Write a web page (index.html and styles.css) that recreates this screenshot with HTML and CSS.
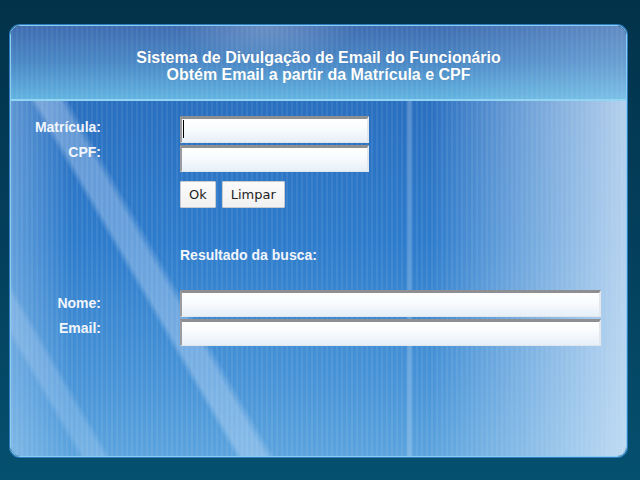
FILE: index.html
```html
<!DOCTYPE html>
<html lang="pt-BR">
<head>
<meta charset="utf-8">
<title>Sistema de Divulgação de Email do Funcionário</title>
<link rel="stylesheet" href="styles.css">
</head>
<body>
<div class="panel">
  <div class="header">
    <div class="title">Sistema de Divulgação de Email do Funcionário</div>
    <div class="title">Obtém Email a partir da Matrícula e CPF</div>
  </div>
  <div class="content">
    <div class="group group-search">
      <div class="labels">
        <label class="lbl" for="mat">Matrícula:</label>
        <label class="lbl" for="cpf">CPF:</label>
      </div>
      <div class="fields">
        <span class="field-wrap"><input class="txt txt-short" id="mat" type="text"><span class="caret"></span></span>
        <input class="txt txt-short" id="cpf" type="text">
        <div class="buttons">
          <button class="btn" type="button">Ok</button>
          <button class="btn" type="button">Limpar</button>
        </div>
      </div>
    </div>
    <div class="result-title">Resultado da busca:</div>
    <div class="group group-result">
      <div class="labels">
        <label class="lbl" for="nome">Nome:</label>
        <label class="lbl" for="email">Email:</label>
      </div>
      <div class="fields">
        <input class="txt txt-long" id="nome" type="text">
        <input class="txt txt-long" id="email" type="text">
      </div>
    </div>
  </div>
</div>
</body>
</html>
```

FILE: styles.css
```css
html, body {
  margin: 0;
  padding: 0;
}
body {
  width: 640px;
  height: 480px;
  overflow: hidden;
  background: linear-gradient(to bottom, #02324a 0%, #033f5c 50%, #05506f 100%);
  font-family: "Liberation Sans", Arial, sans-serif;
}
.panel {
  margin: 25px 0 0 10px;
  width: 615px;
  height: 430px;
  border: 1px solid #8fcdf0;
  border-radius: 10px;
  overflow: hidden;
  display: flex;
  flex-direction: column;
  box-shadow: 0 0 0 1px #2b7cc0;
}
.header {
  height: 75px;
  box-sizing: border-box;
  padding-top: 23px;
  border-bottom: 2px solid #93d4f2;
  text-align: center;
  color: #ffffff;
  background:
    radial-gradient(ellipse 90px 40px at 255px 0px, rgba(255,255,255,0.22), rgba(255,255,255,0) 100%),
    linear-gradient(to right, rgba(255,255,255,0) 0%, rgba(255,255,255,0) 70%, rgba(200,230,250,0.25) 100%),
    repeating-linear-gradient(to right, rgba(255,255,255,0.05) 0 2px, rgba(255,255,255,0) 2px 5px),
    linear-gradient(to bottom, #3f6db1 0%, #4a88c6 50%, #62b3e0 100%);
}
.title {
  font-size: 16px;
  font-weight: bold;
  line-height: 17px;
  text-shadow: 0 0 1px rgba(0,0,0,0.15);
}
.content {
  flex: 1;
  color: #f2f6fb;
  background:
    linear-gradient(to right, rgba(255,255,255,0) 0px, rgba(255,255,255,0) 396px, rgba(255,255,255,0.22) 397px, rgba(255,255,255,0.22) 400px, rgba(255,255,255,0) 401px),
    linear-gradient(60deg, rgba(255,255,255,0) 0px, rgba(255,255,255,0) 194px, rgba(225,238,255,0.32) 200px, rgba(225,238,255,0.32) 220px, rgba(255,255,255,0) 228px),
    linear-gradient(60deg, rgba(255,255,255,0) 0px, rgba(255,255,255,0) 58px, rgba(225,238,255,0.2) 64px, rgba(225,238,255,0.2) 80px, rgba(255,255,255,0) 86px),
    linear-gradient(to right, rgba(190,220,245,0.35) 0px, rgba(190,220,245,0) 60px, rgba(190,220,245,0) 150px),
    linear-gradient(to right, rgba(200,225,245,0) 0%, rgba(200,225,245,0) 68%, rgba(190,218,242,0.45) 83%, rgba(215,232,248,0.8) 100%),
    repeating-linear-gradient(to right, rgba(255,255,255,0.07) 0 2px, rgba(255,255,255,0) 2px 5px),
    linear-gradient(to bottom, #2a6fc0 0%, #2e7ccc 40%, #4a95d8 80%, #5ca4de 100%);
}
.group {
  display: flex;
  align-items: flex-start;
}
.group-search {
  margin-top: 15px;
}
.labels {
  width: 90px;
  flex: none;
  display: flex;
  flex-direction: column;
  align-items: flex-end;
  gap: 9px;
  margin-right: 79px;
  padding-top: 3px;
}
.group-result .labels {
  padding-top: 5px;
}
.lbl {
  font-size: 14px;
  font-weight: bold;
  line-height: 16px;
  color: #f2f6fb;
}
.fields {
  display: flex;
  flex-direction: column;
  align-items: flex-start;
  gap: 2px;
}
.field-wrap {
  position: relative;
  display: block;
}
.caret {
  position: absolute;
  left: 3px;
  top: 4px;
  width: 1px;
  height: 18px;
  background: #000;
}
.txt {
  display: block;
  box-sizing: border-box;
  height: 27px;
  margin: 0;
  padding: 0 3px;
  border-style: solid;
  border-width: 3px 2px 1px 2px;
  border-color: #8d8f92 #e4e8ec #dfe6ec #9a9ca0;
  background: linear-gradient(to bottom, #ffffff 0%, #f8fbfe 45%, #e6eff8 100%);
  outline: none;
  font-family: "DejaVu Sans", sans-serif;
  font-size: 13px;
}
.txt-short {
  width: 189px;
}
.txt-long {
  width: 421px;
}
.buttons {
  display: flex;
  gap: 6px;
  margin-top: 7px;
}
.btn {
  box-sizing: border-box;
  height: 27px;
  margin: 0;
  padding: 0 8px;
  border: 1px solid #c7cbd0;
  border-radius: 1px;
  background: linear-gradient(to bottom, #fbfbfb 0%, #f1f1f1 100%);
  color: #1e1e1e;
  font-family: "DejaVu Sans", sans-serif;
  font-size: 13px;
}
.result-title {
  margin: 39px 0 0 169px;
  font-size: 14px;
  font-weight: bold;
  line-height: 16px;
  color: #f2f6fb;
}
.group-result {
  margin-top: 27px;
}
```
